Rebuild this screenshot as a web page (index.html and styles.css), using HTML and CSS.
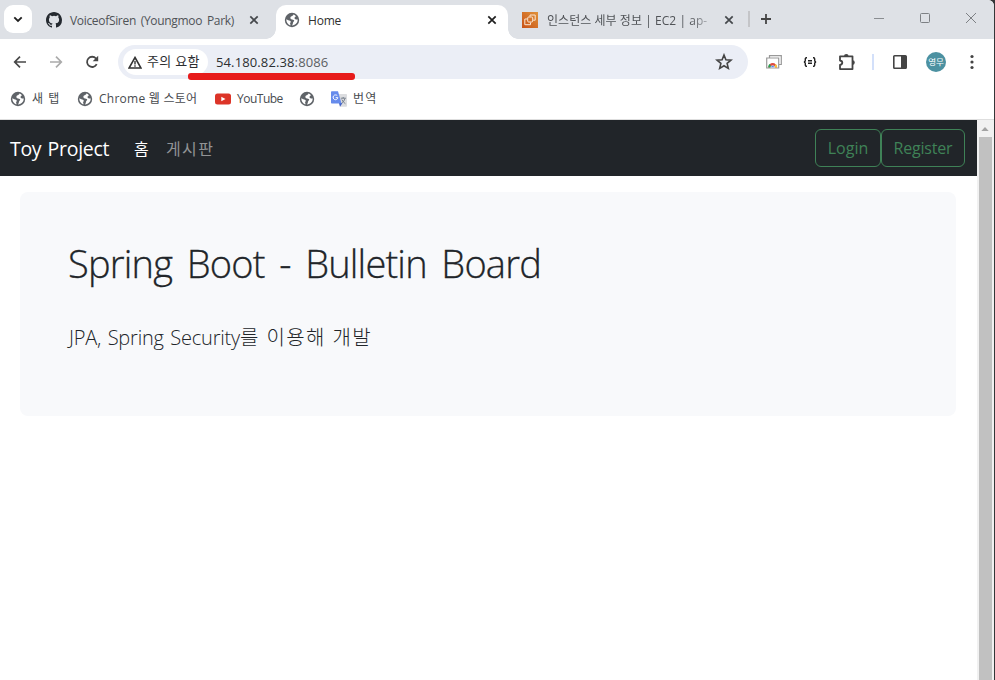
FILE: index.html
```html
<!DOCTYPE html>
<html lang="ko">
<head>
<meta charset="utf-8">
<title>Home</title>
<link rel="stylesheet" href="styles.css">
</head>
<body>
<svg width="0" height="0" class="defs" aria-hidden="true">
  <symbol id="globe" viewBox="0 0 16 16"><circle cx="8" cy="8" r="7.200" fill="#5f6368"/><path d="M9.300 2.500C9.300 3.500 8.500 3.900 7.600 4.200 6.200 4.800 5.800 6.300 7.200 7.300 8.300 8 9.900 7.300 10.200 8.600 10.400 9.500 9.200 9.900 9 10.800 8.900 11.900 8.600 12.800 7.900 13.600 9.700 13.600 11.500 12.700 12.600 11.100 13.500 9.900 13.800 8.500 13.600 7.200 12.700 8 11.200 7.300 10.600 6.400 9.900 5.300 11.700 5.100 11.800 4.200 11.200 3.300 10.200 2.700 9.300 2.500ZM2.300 7.300C2.100 10.200 3.800 12.600 6.300 13.400 6.600 12.400 6.400 11.500 5.800 11.200 6.800 10.500 7.200 9.700 6.300 9 5 8 3.600 8.400 2.300 7.300Z" fill="#fff"/></symbol>
  <symbol id="close" viewBox="0 0 10 10"><path d="M1.300 1.300 8.700 8.700M8.700 1.300 1.300 8.700" fill="none" stroke="currentColor" stroke-width="1.700"/></symbol>
</svg>
<div class="window">
  <header class="tabstrip">
    <button class="tab-search"><svg width="10" height="7" viewBox="0 0 10 7"><path d="M1.300 1.300 5 5 8.700 1.300" fill="none" stroke="#1f1f1f" stroke-width="1.800"/></svg></button>
    <div class="tab tab-first">
      <svg class="favicon" width="16" height="16" viewBox="0 0 16 16"><path fill="#24292f" d="M8 0C3.58 0 0 3.58 0 8c0 3.54 2.29 6.53 5.47 7.59.4.07.55-.17.55-.38 0-.19-.01-.82-.01-1.49-2.01.37-2.53-.49-2.69-.94-.09-.23-.48-.94-.82-1.13-.28-.15-.68-.52-.01-.53.63-.01 1.08.58 1.23.82.72 1.21 1.87.87 2.33.66.07-.52.28-.87.51-1.07-1.78-.2-3.64-.89-3.64-3.95 0-.87.31-1.59.82-2.15-.08-.2-.36-1.02.08-2.12 0 0 .67-.21 2.2.82a7.6 7.6 0 0 1 4 0c1.53-1.04 2.2-.82 2.2-.82.44 1.1.16 1.92.08 2.12.51.56.82 1.27.82 2.15 0 3.07-1.87 3.75-3.65 3.95.29.25.54.73.54 1.48 0 1.07-.01 1.93-.01 2.2 0 .21.15.46.55.38A8 8 0 0 0 16 8c0-4.42-3.58-8-8-8Z"/></svg>
      <span class="tab-title t-github">VoiceofSiren (Youngmoo Park)</span>
      <svg class="tab-close" width="10" height="10"><use href="#close"/></svg>
    </div>
    <div class="tab tab-active">
      <svg class="favicon" width="16" height="16"><use href="#globe"/></svg>
      <span class="tab-title t-home">Home</span>
      <svg class="tab-close" width="10" height="10"><use href="#close"/></svg>
    </div>
    <div class="tab tab-last">
      <svg class="favicon" width="16" height="16" viewBox="0 0 16 16"><defs><linearGradient id="aws" x1="0" y1="1" x2="1" y2="0"><stop stop-color="#c85217"/><stop offset="1" stop-color="#e0923a"/></linearGradient></defs><path fill="url(#aws)" d="M0 0h16v16H0z"/><g fill="none" stroke="#fbe6d2" stroke-width="1"><rect x="5.700" y="5" width="5" height="5" rx="1"/><path d="M8 4.500V3h5.200v5.200h-2M5 7H2.800v5.700h5.700v-2.200"/></g></svg>
      <span class="tab-title t-aws">인스턴스 세부 정보 | EC2 | ap-</span>
      <svg class="tab-close" width="10" height="10"><use href="#close"/></svg>
    </div>
    <i class="tab-sep"></i>
    <svg class="new-tab" width="12" height="12" viewBox="0 0 12 12"><path d="M6 1v10M1 6h10" stroke="#444" stroke-width="1.800"/></svg>
    <div class="controls">
      <svg width="10" height="10" viewBox="0 0 10 10"><path d="M0 5.500h10" stroke="#8a8d91"/></svg>
      <svg width="10" height="10" viewBox="0 0 10 10"><rect x=".5" y=".5" width="9" height="9" rx="1" fill="none" stroke="#7d8084"/></svg>
      <svg width="10" height="10" viewBox="0 0 10 10"><path d="M0 0l10 10M10 0 0 10" stroke="#7d8084"/></svg>
    </div>
  </header>

  <div class="toolbar">
    <svg class="back" width="14" height="14" viewBox="0 0 14 14"><path d="M13 7H2M7 1.700 1.700 7 7 12.300" fill="none" stroke="#474747" stroke-width="1.700"/></svg>
    <svg class="forward" width="14" height="14" viewBox="0 0 14 14"><path d="M1 7h11M7 1.700 12.300 7 7 12.300" fill="none" stroke="#ababab" stroke-width="1.700"/></svg>
    <svg class="reload" width="14" height="14" viewBox="0 0 14 14"><path d="M11.700 9.200A5.100 5.100 0 1 1 11 3.500L12.500 5" fill="none" stroke="#474747" stroke-width="1.800"/><path d="M13.200.8v5.500H7.700z" fill="#474747"/></svg>
    <div class="omnibox">
      <div class="chip">
        <svg width="14" height="13" viewBox="0 0 14 13"><path d="M7 1.500 13 12H1Z" fill="none" stroke="#333" stroke-width="1.600"/><path d="M7 5v3.500M7 9.300v1.400" stroke="#333" stroke-width="1.400"/></svg>
        <span>주의 요함</span>
      </div>
      <span class="url">54.180.82.38<em>:8086</em></span>
      <svg class="star" width="18" height="18" viewBox="0 0 18 18"><path d="M9 2 10.900 6.700 16 7.100 12.100 10.400 13.300 15.400 9 12.700 4.700 15.400 5.900 10.400 2 7.100 7.100 6.700Z" fill="none" stroke="#444" stroke-width="1.600"/></svg>
      <i class="underline"></i>
    </div>
    <div class="actions">
      <svg class="ext-web" width="16" height="14" viewBox="0 0 16 14"><g fill="#fff" stroke="#999" stroke-width="1.200"><path d="M3.500 3V.7h11.800v8.800H13"/><path d="M.7 3h12v10H.7z"/></g><path d="M2.300 12.500a4.400 4.400 0 0 1 8.800 0z" fill="#de4b3f"/><path d="M2.200 12.600c0-2 .6-3 1.500-3.500l2 3.500z" fill="#25a256"/><path d="M11.200 12.600c0-2-.6-2.800-1.500-3.500l-2 3.500z" fill="#f5c33c"/><path d="M4.700 12.600a2 2 0 0 1 4 0z" fill="#4285f4" stroke="#fff" stroke-width=".5"/></svg>
      <svg class="ext-json" width="14" height="10" viewBox="0 0 14 10"><path d="M4 .8H3.300Q2.300.8 2.300 2v1.500Q2.300 4.700 1 5q1.300.3 1.300 1.500V8q0 1.200 1 1.200H4M10 .8h.7q1 0 1 1.200v1.500q0 1.200 1.300 1.500-1.300.3-1.300 1.500V8q0 1.200-1 1.200H10M5 3.800h4M5 6.300h4" fill="none" stroke="#222" stroke-width="1.400"/></svg>
      <svg class="ext-puzzle" width="18" height="18" viewBox="0 0 18 18"><path d="M2 3.300h12.500v12.800H2v-4.200q2.300-.5 2.300-2.200T2 7.500Z" fill="none" stroke="#444" stroke-width="1.800" stroke-linejoin="round"/><path d="M6 3.300a2.300 2.300 0 0 1 4.600 0zM14.500 7.300a2.300 2.300 0 0 1 0 4.600z" fill="#444"/></svg>
      <i class="divider"></i>
      <svg class="side-panel" width="16" height="16" viewBox="0 0 16 16"><rect x="1.800" y="1.800" width="12.400" height="12.400" rx=".8" fill="none" stroke="#444" stroke-width="1.600"/><path d="M9 2h5v12H9z" fill="#444"/></svg>
      <span class="avatar">영무</span>
      <svg width="4" height="16" viewBox="0 0 4 16" fill="#444"><circle cx="2" cy="2.500" r="1.600"/><circle cx="2" cy="8" r="1.600"/><circle cx="2" cy="13.500" r="1.600"/></svg>
    </div>
  </div>

  <nav class="bookmarks">
    <a class="bm bm-new"><svg width="16" height="16"><use href="#globe"/></svg><span>새 탭</span></a>
    <a class="bm bm-store"><svg width="16" height="16"><use href="#globe"/></svg><span>Chrome 웹 스토어</span></a>
    <a class="bm bm-youtube"><svg width="16" height="16" viewBox="0 0 16 16"><rect y="2.500" width="16" height="11" rx="2.500" fill="#dc3428"/><path d="m6.300 5.700 4.200 2.300-4.200 2.300z" fill="#fff"/></svg><span>YouTube</span></a>
    <a class="bm bm-blank"><svg width="16" height="16"><use href="#globe"/></svg></a>
    <a class="bm bm-translate"><svg width="16" height="16" viewBox="0 0 16 16"><path d="M6 3h9.200a.8.8 0 0 1 .8.800V15a.8.8 0 0 1-.8.800H9z" fill="#dcdde0"/><path d="M8 12h3.500L9 15.800z" fill="#3f5fc4"/><path d="M.8.200H7L10.500 12.500H.8A.8.800 0 0 1 0 11.700V1A.8.800 0 0 1 .8.200Z" fill="#668bec"/><path d="M6.300 4.700A2.400 2.400 0 1 0 6.900 6.700H4.700" fill="none" stroke="#fff" stroke-width="1"/><path d="M9.800 7.200h5M12.200 6v1.200M14 7.500q-.8 3.200-3.300 4.500M10.800 8.500q1.200 2.700 3.600 4.200" fill="none" stroke="#6d7684" stroke-width=".9"/></svg><span>번역</span></a>
  </nav>

  <div class="viewport">
    <div class="page">
      <nav class="navbar">
        <a class="brand">Toy Project</a>
        <a class="nav-home">홈</a>
        <a class="nav-board">게시판</a>
        <div class="auth">
          <a class="btn btn-login"><span>Login</span></a>
          <a class="btn btn-register"><span>Register</span></a>
        </div>
      </nav>
      <main class="hero">
        <h1>Spring Boot - Bulletin Board</h1>
        <p><span class="lead-en">JPA, Spring Security</span><span class="lead-ko">를 이용해 개발</span></p>
      </main>
    </div>
    <div class="scrollbar">
      <svg width="16" height="17" viewBox="0 0 16 17"><path d="M8 7 11.700 11H4.300Z" fill="#a3a3a3"/></svg>
      <i class="thumb"></i>
    </div>
  </div>
</div>
</body>
</html>
```
FILE: styles.css
```css
* { box-sizing: border-box; }
body { margin: 0; background: #343638; overflow: hidden; font-family: "Open Sans", "Noto Sans CJK KR", sans-serif; }
svg { display: block; flex: none; }
.defs { position: absolute; }
span, a, h1, p { white-space: nowrap; }
.window { width: 994px; height: 680px; display: flex; flex-direction: column; background: #fff; border-radius: 0 6px 0 0; overflow: hidden; }

.tabstrip { height: 39px; flex: none; display: flex; background: #dee1e6; font-size: 12px; color: #505357; }
.tab-search { width: 28px; height: 28px; margin: 5px 14px 0 4px; padding: 0; border: 0; border-radius: 9px; background: #fff; display: flex; align-items: center; justify-content: center; }
.tab { display: flex; align-items: center; height: 39px; }
.tab-title { line-height: 16px; margin-top: 2px; }
.tab-first { width: 230px; }
.tab-first .tab-title { margin-left: 8px; width: 174px; letter-spacing: -.32px; word-spacing: 2px; }
.tab-close { margin-left: 5px; color: #45484c; }
.tab-active { position: relative; width: 232px; height: 34px; margin-top: 5px; padding: 0 11px 5px 8px; background: #fff; border-radius: 10px 10px 0 0; color: #303030; }
.tab-active::before, .tab-active::after { content: ""; position: absolute; bottom: 0; width: 10px; height: 10px; }
.tab-active::before { left: -10px; background: radial-gradient(circle at 0 0, #dee1e6 9.500px, #fff 10px); }
.tab-active::after { right: -10px; background: radial-gradient(circle at 100% 0, #dee1e6 9.500px, #fff 10px); }
.tab-active .tab-title { margin-left: 8px; letter-spacing: -.2px; }
.tab-active .tab-close { margin-left: auto; color: #1f1f1f; }
.tab-last { width: 226px; padding-left: 14px; }
.tab-last .tab-title { margin-left: 9px; width: 165px; letter-spacing: .05px; -webkit-mask-image: linear-gradient(90deg, #000 143px, transparent 170px); mask-image: linear-gradient(90deg, #000 143px, transparent 170px); }
.tab-last .tab-close { margin-left: 14px; }
.tab-sep { width: 2px; height: 16px; margin: 11px 0 0 14px; background: #c4c5c8; }
.new-tab { margin: 13px 0 0 10px; }
.controls { margin: 13px 18px 0 auto; display: flex; gap: 36px; }

.toolbar { height: 45px; flex: none; display: flex; align-items: center; background: #fff; }
.back { margin-left: 13px; }
.forward { margin-left: 22px; }
.reload { margin-left: 22px; }
.omnibox { position: relative; width: 630px; height: 34px; margin: 1px 0 0 19px; padding: 0 15px 0 5px; border-radius: 17px; background: #ebeef6; display: flex; align-items: center; font-size: 13px; color: #2c2e31; }
.chip { width: 85px; height: 26px; border-radius: 13px; background: #fff; display: flex; align-items: center; padding-left: 5px; gap: 5px; letter-spacing: .3px; }
.chip span { margin-top: -3px; }
.url { margin-left: 8px; letter-spacing: .12px; }
.url em { font-style: normal; color: #5c5f63; }
.star { margin-left: auto; }
.underline { position: absolute; left: 70px; top: 28px; width: 167px; height: 7px; border-radius: 3px; background: #e71b1b; }
.actions { display: flex; align-items: center; margin-left: 18px; }
.ext-web, .ext-json { margin-right: 21px; }
.ext-puzzle { margin-right: 16px; }
.divider { width: 2px; height: 16px; margin-right: 18px; background: #d3e0fa; }
.side-panel { margin-right: 18px; }
.avatar { width: 20px; height: 20px; margin-right: 24px; border-radius: 50%; background: #4c91a1; color: #fff; font-size: 8.500px; line-height: 19px; text-align: center; }

.bookmarks { height: 36px; flex: none; padding: 0 0 6px 10px; display: flex; align-items: center; border-bottom: 1px solid #dedede; color: #484b4f; font-size: 12px; }
.bm { display: flex; align-items: center; gap: 6px; height: 16px; }
.bm span { margin-top: -1px; }
.bm-new { width: 67px; letter-spacing: 1px; }
.bm-store { width: 138px; letter-spacing: .25px; }
.bm-youtube { width: 84px; letter-spacing: -.5px; }
.bm-blank { width: 32px; }
.bm-translate { letter-spacing: 1.200px; }

.viewport { flex: 1; display: flex; }
.page { width: 977px; background: #fff; }
.navbar { height: 56px; padding: 0 12px 0 10px; display: flex; align-items: center; background: #212529; font-size: 16px; color: #fff; }
.brand { width: 124px; font-size: 19.500px; font-weight: 450; letter-spacing: -.3px; word-spacing: 1.500px; }
.nav-home { width: 32px; }
.nav-board { color: #919395; letter-spacing: 1.400px; }
.nav-home, .nav-board { margin-top: -1px; }
.auth { margin-left: auto; display: flex; }
.btn { height: 38px; border: 1px solid #3f8257; border-radius: 6px; color: #3f8257; display: flex; align-items: center; justify-content: center; }
.btn-login { width: 66px; }
.btn-register { width: 84px; letter-spacing: -.2px; }
.hero { margin: 16px 21px 0 20px; height: 224px; padding: 47px 48px; border-radius: 8px; background: #f8f9fb; color: #212529; }
.hero h1 { margin: 0; font-size: 38px; line-height: 48px; font-weight: 350; letter-spacing: -.8px; word-spacing: 5.500px; -webkit-text-stroke: .3px #212529; }
.hero p { margin: 36px 0 0; font-size: 20px; line-height: 30px; font-weight: 300; }
.lead-en { margin-left: 1px; letter-spacing: -.2px; word-spacing: 1.500px; }
.lead-ko { letter-spacing: 1.400px; }
.scrollbar { width: 17px; background: #f1f1f1; }
.thumb { display: block; width: 13px; height: 543px; margin-left: 2px; background: #c1c1c1; }
```
